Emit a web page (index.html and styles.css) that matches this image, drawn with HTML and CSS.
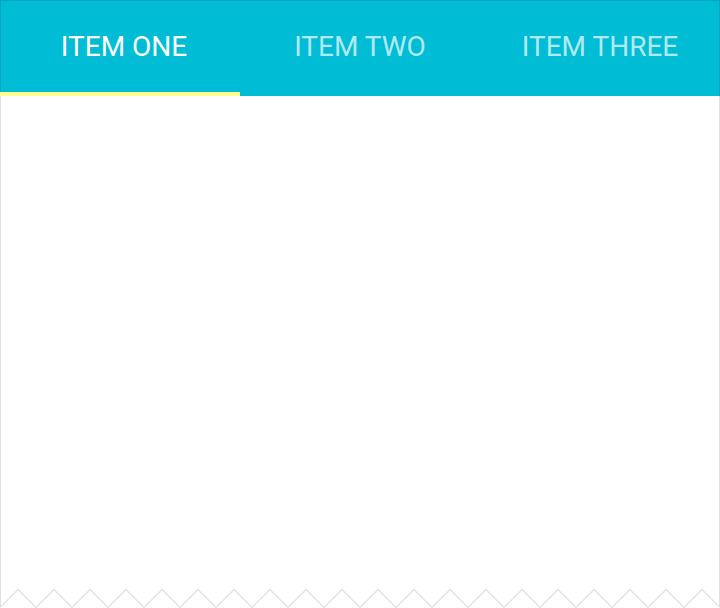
FILE: index.html
```html
<!DOCTYPE html>
<html>
<head>
<meta charset="utf-8">
<link rel="stylesheet" href="styles.css">
</head>
<body>
<div class="page">
  <nav class="tabs">
    <div class="tab active">ITEM ONE</div>
    <div class="tab">ITEM TWO</div>
    <div class="tab">ITEM THREE</div>
  </nav>
  <div class="content"></div>
  <svg class="zigzag" width="720" height="19" viewBox="0 0 720 19">
    <line x1="0.5" y1="0" x2="0.5" y2="18" stroke="#e0e0e0" stroke-width="1"/>
    <line x1="719.5" y1="0" x2="719.5" y2="18" stroke="#e0e0e0" stroke-width="1"/>
    <polyline fill="none" stroke="#e0e0e0" stroke-width="1.2" points="0,18.5 18,0.5 36,18.5 54,0.5 72,18.5 90,0.5 108,18.5 126,0.5 144,18.5 162,0.5 180,18.5 198,0.5 216,18.5 234,0.5 252,18.5 270,0.5 288,18.5 306,0.5 324,18.5 342,0.5 360,18.5 378,0.5 396,18.5 414,0.5 432,18.5 450,0.5 468,18.5 486,0.5 504,18.5 522,0.5 540,18.5 558,0.5 576,18.5 594,0.5 612,18.5 630,0.5 648,18.5 666,0.5 684,18.5 702,0.5 720,18.5"/>
  </svg>
</div>
</body>
</html>
```
FILE: styles.css
```css
html, body {
  margin: 0;
  padding: 0;
  background: #ffffff;
}
.page {
  width: 720px;
  height: 608px;
  display: flex;
  flex-direction: column;
  overflow: hidden;
}
.tabs {
  display: flex;
  height: 96px;
  box-sizing: border-box;
  background: #00bcd4;
  border: 1px solid rgba(0, 0, 0, 0.1);
  border-bottom: none;
}
.tab {
  flex: 0 0 240px;
  display: flex;
  align-items: center;
  justify-content: center;
  font-family: Roboto, "Liberation Sans", sans-serif;
  font-size: 28px;
  font-weight: 400;
  color: rgba(255, 255, 255, 0.7);
  box-sizing: border-box;
  padding-bottom: 5px;
}
.tab.active {
  color: #ffffff;
  box-shadow: inset 0 -4px 0 #ffff8d;
}
.tab:first-child {
  margin-left: -1px;
  padding-left: 8px;
}
.tab:last-child {
  margin-right: -1px;
}
.content {
  height: 493px;
  box-sizing: border-box;
  border-left: 1px solid #e0e0e0;
  border-right: 1px solid #e0e0e0;
}
.zigzag {
  display: block;
}
```
